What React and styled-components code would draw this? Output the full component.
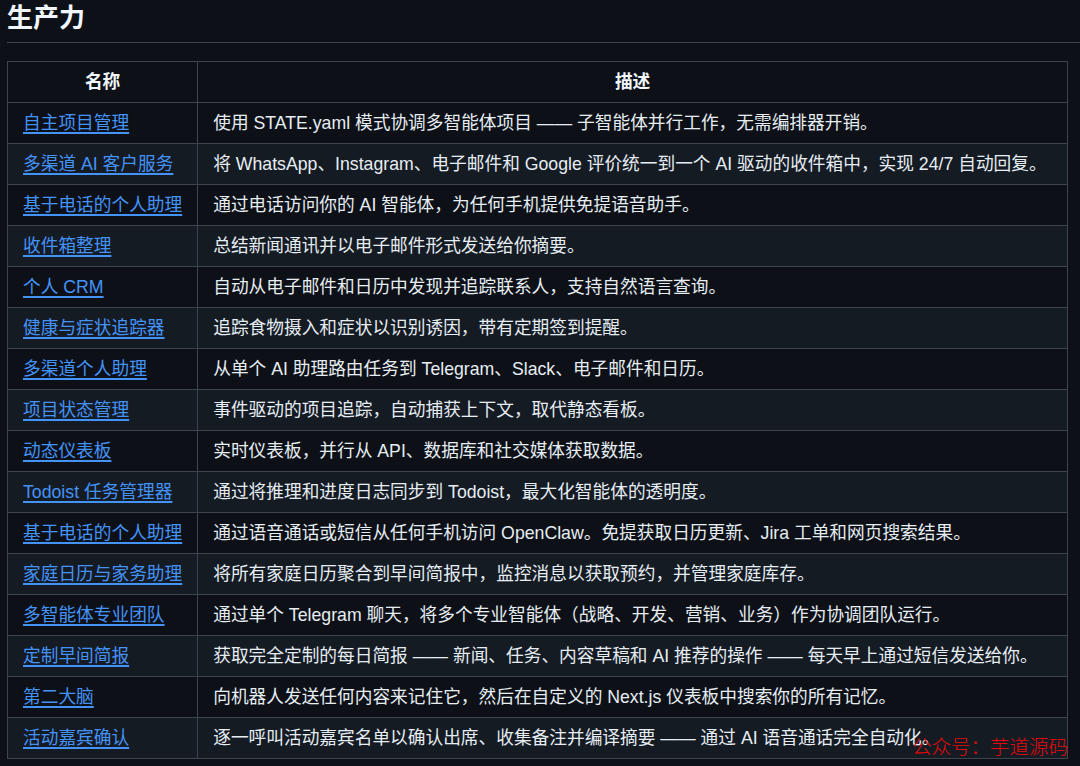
import React from "react";
import styled, { createGlobalStyle } from "styled-components";

const GlobalStyle = createGlobalStyle`
  html, body {
    margin: 0;
    padding: 0;
    background: #0d1117;
  }
  body {
    font-family: "Liberation Sans", "Noto Sans CJK SC", sans-serif;
    color: #e6edf3;
  }
`;

const Page = styled.div`
  position: relative;
  width: 1080px;
  height: 766px;
  overflow: hidden;
  padding-left: 7px;
  box-sizing: border-box;
`;

const Heading = styled.h2`
  margin: 2px 0 0;
  padding-bottom: 7px;
  font-size: 26px;
  line-height: 33px;
  font-weight: 700;
  color: #f0f6fc;
  border-bottom: 1px solid #3d444d;
`;

const Table = styled.table`
  margin-top: 18px;
  width: 1061px;
  border-collapse: collapse;
  border: 1px solid #3d444d;
  font-size: 17.7px;
`;

const HeadCell = styled.th`
  width: ${(p) => (p.$narrow ? "156px" : "auto")};
  padding: 7px 15px;
  line-height: 26px;
  font-weight: 700;
  color: #f0f6fc;
  text-align: center;
  border: 1px solid #3d444d;
  white-space: nowrap;
`;

const Row = styled.tr`
  background: ${(p) => (p.$striped ? "#151b23" : "#0d1117")};
`;

const Cell = styled.td`
  padding: 7px 15px;
  line-height: 26px;
  border: 1px solid #3d444d;
  white-space: nowrap;
  color: #e6edf3;
`;

const Link = styled.a`
  color: #4493f8;
  text-decoration: underline;
  text-underline-offset: 3px;
  text-decoration-thickness: 1.5px;
`;

const Watermark = styled.div`
  position: absolute;
  right: 12px;
  bottom: 9px;
  font-family: "Noto Sans CJK SC", serif;
  font-weight: 300;
  font-size: 19.5px;
  line-height: 22px;
  color: #e8080b;
`;

const rows = [
  ["自主项目管理", "使用 STATE.yaml 模式协调多智能体项目 —— 子智能体并行工作，无需编排器开销。"],
  ["多渠道 AI 客户服务", "将 WhatsApp、Instagram、电子邮件和 Google 评价统一到一个 AI 驱动的收件箱中，实现 24/7 自动回复。"],
  ["基于电话的个人助理", "通过电话访问你的 AI 智能体，为任何手机提供免提语音助手。"],
  ["收件箱整理", "总结新闻通讯并以电子邮件形式发送给你摘要。"],
  ["个人 CRM", "自动从电子邮件和日历中发现并追踪联系人，支持自然语言查询。"],
  ["健康与症状追踪器", "追踪食物摄入和症状以识别诱因，带有定期签到提醒。"],
  ["多渠道个人助理", "从单个 AI 助理路由任务到 Telegram、Slack、电子邮件和日历。"],
  ["项目状态管理", "事件驱动的项目追踪，自动捕获上下文，取代静态看板。"],
  ["动态仪表板", "实时仪表板，并行从 API、数据库和社交媒体获取数据。"],
  ["Todoist 任务管理器", "通过将推理和进度日志同步到 Todoist，最大化智能体的透明度。"],
  ["基于电话的个人助理", "通过语音通话或短信从任何手机访问 OpenClaw。免提获取日历更新、Jira 工单和网页搜索结果。"],
  ["家庭日历与家务助理", "将所有家庭日历聚合到早间简报中，监控消息以获取预约，并管理家庭库存。"],
  ["多智能体专业团队", "通过单个 Telegram 聊天，将多个专业智能体（战略、开发、营销、业务）作为协调团队运行。"],
  ["定制早间简报", "获取完全定制的每日简报 —— 新闻、任务、内容草稿和 AI 推荐的操作 —— 每天早上通过短信发送给你。"],
  ["第二大脑", "向机器人发送任何内容来记住它，然后在自定义的 Next.js 仪表板中搜索你的所有记忆。"],
  ["活动嘉宾确认", "逐一呼叫活动嘉宾名单以确认出席、收集备注并编译摘要 —— 通过 AI 语音通话完全自动化。"],
];

function App() {
  return (
    <Page>
      <GlobalStyle />
      <Heading>生产力</Heading>
      <Table>
        <thead>
          <tr>
            <HeadCell $narrow>名称</HeadCell>
            <HeadCell>描述</HeadCell>
          </tr>
        </thead>
        <tbody>
          {rows.map(([name, desc], i) => (
            <Row key={i} $striped={i % 2 === 1}>
              <Cell>
                <Link href="#">{name}</Link>
              </Cell>
              <Cell>{desc}</Cell>
            </Row>
          ))}
        </tbody>
      </Table>
      <Watermark>公众号：芋道源码</Watermark>
    </Page>
  );
}

export default App;
